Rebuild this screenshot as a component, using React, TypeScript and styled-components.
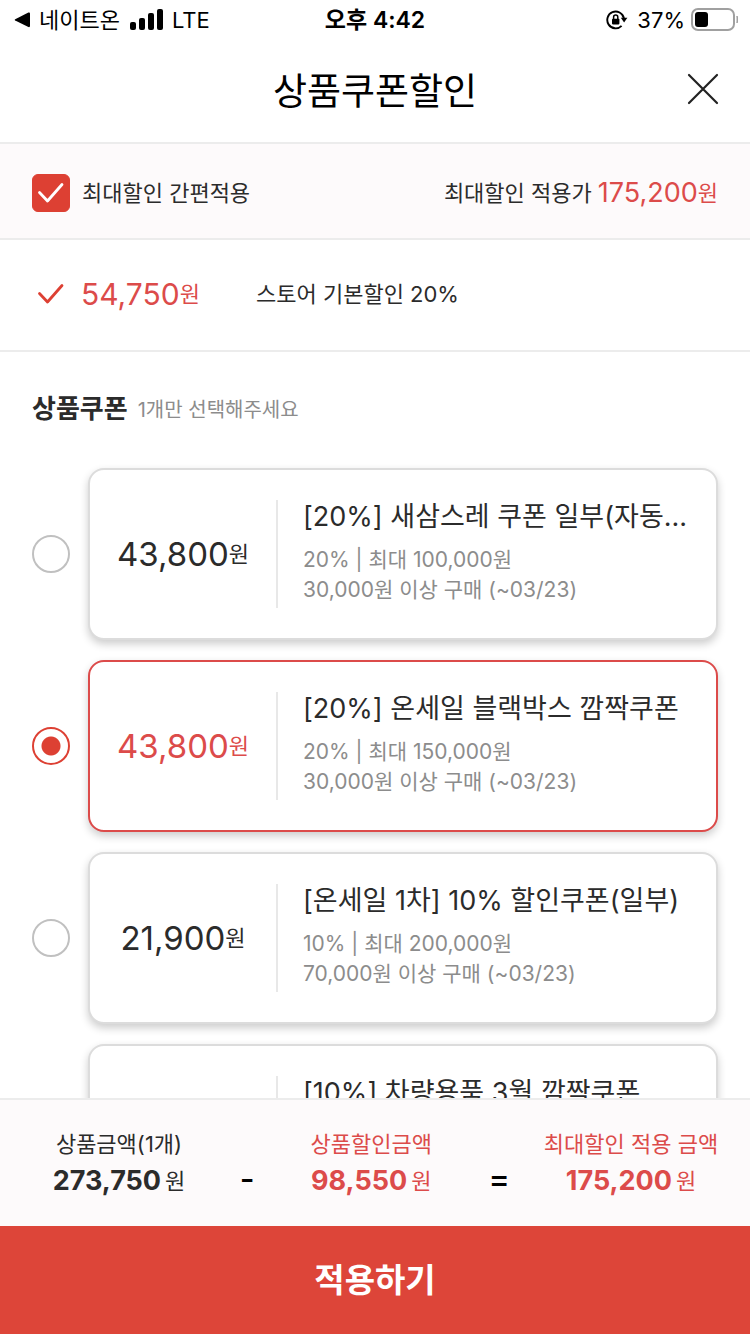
import React, { useState } from "react";
import styled, { createGlobalStyle, css } from "styled-components";

const color = {
  text: "#2b2b2b",
  muted: "#8c8c8c",
  red: "#dd4033",
  redText: "#dc4b4a",
  button: "#dd4539",
  line: "#ececec",
  tint: "#fdfafb",
};

const GlobalStyle = createGlobalStyle`
  *, *::before, *::after { box-sizing: border-box; }
  body {
    margin: 0;
    background: #fff;
    color: ${color.text};
    font-family: Inter, "Noto Sans CJK KR", sans-serif;
    font-size: 22px;
    line-height: 30px;
  }
  button, input { font: inherit; color: inherit; margin: 0; }
  h1, h2, p { margin: 0; font-weight: 400; }
`;

const Screen = styled.div`
  display: flex;
  flex-direction: column;
  height: 100vh;
`;

const StatusBar = styled.div`
  display: grid;
  grid-template-columns: 1fr auto 1fr;
  align-items: center;
  height: 40px;
  flex: none;
  padding: 0 12px;
  color: #000;
`;

const StatusGroup = styled.div<{ $end?: boolean }>`
  display: flex;
  align-items: center;
  gap: 9px;
  justify-content: ${(p) => (p.$end ? "flex-end" : "flex-start")};
`;

const Clock = styled.time`
  font-size: 23px;
  font-weight: 600;
`;

const Battery = styled.span`
  display: flex;
  align-items: center;
  gap: 6px;
`;

const Header = styled.header`
  display: grid;
  grid-template-columns: 1fr auto 1fr;
  align-items: center;
  height: 104px;
  flex: none;
  padding: 0 31px 4px;
  border-bottom: 2px solid ${color.line};
`;

const Title = styled.h1`
  grid-column: 2;
  padding-top: 6px;
  font-size: 37px;
  line-height: 48px;
  color: #000;
`;

const CloseButton = styled.button`
  justify-self: end;
  display: flex;
  padding: 0;
  border: 0;
  background: none;
  cursor: pointer;
`;

const QuickApply = styled.section`
  display: flex;
  align-items: center;
  justify-content: space-between;
  height: 96px;
  flex: none;
  padding: 4px 32px 0;
  background: ${color.tint};
  border-bottom: 2px solid ${color.line};
`;

const CheckLabel = styled.label`
  display: flex;
  align-items: center;
  gap: 12px;
  cursor: pointer;
`;

const CheckWrap = styled.span`
  display: grid;
  > * { grid-area: 1 / 1; }
  svg { pointer-events: none; }
`;

const Checkbox = styled.input`
  appearance: none;
  width: 38px;
  height: 38px;
  border: 1px solid #bbb;
  border-radius: 6px;
  background: #fff;
  &:checked { background: ${color.red}; border-color: ${color.red}; }
`;

const Inline = styled.p`
  display: flex;
  align-items: center;
  gap: 6px;
`;

const StoreDiscount = styled.section`
  display: flex;
  align-items: center;
  height: 112px;
  flex: none;
  padding: 0 32px 2px;
  border-bottom: 2px solid ${color.line};
`;

const StoreAmount = styled.div`
  display: flex;
  align-items: center;
  gap: 11px;
  width: 224px;
`;

type AmountSize = "small" | "medium" | "large";
const amountSizes = { small: 27, medium: 30, large: 33 };

const Amount = styled.span<{ $size: AmountSize; $red?: boolean }>`
  display: inline-flex;
  align-items: center;
  font-size: ${(p) => amountSizes[p.$size]}px;
  white-space: nowrap;
  ${(p) => p.$red && css`color: ${color.redText};`}
`;

const Won = styled.span`
  font-size: 22px;
  font-weight: 400;
`;

const CouponArea = styled.main`
  flex: 1;
  min-height: 0;
  overflow-y: auto;
  scrollbar-width: none;
  padding: 38px 32px 20px;
`;

const SectionHead = styled.div`
  display: flex;
  align-items: center;
  gap: 10px;
  height: 38px;
  margin-bottom: 40px;
`;

const SectionTitle = styled.h2`
  font-size: 26px;
  font-weight: 700;
`;

const Hint = styled.p`
  padding-top: 2px;
  font-size: 20px;
  color: ${color.muted};
`;

const CouponRow = styled.label`
  display: flex;
  align-items: center;
  gap: 18px;
  margin-bottom: 20px;
  cursor: pointer;
`;

const Radio = styled.input`
  appearance: none;
  flex: none;
  width: 38px;
  height: 38px;
  border: 2px solid #c0c0c0;
  border-radius: 50%;
  background: #fff;
  &:checked {
    border-color: ${color.red};
    background: radial-gradient(circle, ${color.red} 9px, #fff 10px);
  }
`;

const Card = styled.div<{ $selected: boolean }>`
  display: flex;
  flex: 1;
  min-width: 0;
  min-height: 172px;
  padding: 30px 26px 30px 0;
  border: 2px solid ${(p) => (p.$selected ? color.redText : "#dcdcdc")};
  border-radius: 16px;
  background: #fff;
  box-shadow: 0 4px 8px rgba(0, 0, 0, 0.2);
`;

const PriceCell = styled.div`
  display: flex;
  align-items: center;
  justify-content: center;
  flex: none;
  width: 188px;
  border-right: 2px solid #e8e8e8;
`;

const CouponInfo = styled.div`
  min-width: 0;
  padding-left: 25px;
`;

const CouponName = styled.p`
  margin-bottom: 11px;
  font-size: 27px;
  line-height: 34px;
  overflow: hidden;
  text-overflow: ellipsis;
  white-space: nowrap;
`;

const Condition = styled.p`
  font-size: 21px;
  color: ${color.muted};
`;

const Summary = styled.section`
  display: grid;
  grid-template-columns: 174px 11fr 166px 12fr 174px;
  align-items: end;
  justify-items: center;
  flex: none;
  height: 128px;
  padding: 0 32px 30px;
  background: ${color.tint};
  border-top: 2px solid ${color.line};
`;

const SummaryItem = styled.div<{ $red?: boolean }>`
  display: flex;
  flex-direction: column;
  align-items: center;
  gap: 7px;
  white-space: nowrap;
  ${(p) => p.$red && css`color: ${color.redText};`}
`;

const Total = styled.strong`
  display: flex;
  align-items: center;
  gap: 4px;
  font-size: 27px;
  font-weight: 700;
`;

const Operator = styled.span`
  font-size: 32px;
  line-height: 34px;
  font-weight: 500;
  color: #000;
`;

const ApplyButton = styled.button`
  flex: none;
  height: 108px;
  border: 0;
  background: ${color.button};
  color: #fff;
  font-size: 33px;
  font-weight: 700;
  cursor: pointer;
`;

const coupons: { id: string; price?: string; name: string; conditions: string[] }[] = [
  { id: "a", price: "43,800", name: "[20%] 새삼스레 쿠폰 일부(자동...", conditions: ["20% | 최대 100,000원", "30,000원 이상 구매 (~03/23)"] },
  { id: "b", price: "43,800", name: "[20%] 온세일 블랙박스 깜짝쿠폰", conditions: ["20% | 최대 150,000원", "30,000원 이상 구매 (~03/23)"] },
  { id: "c", price: "21,900", name: "[온세일 1차] 10% 할인쿠폰(일부)", conditions: ["10% | 최대 200,000원", "70,000원 이상 구매 (~03/23)"] },
  { id: "d", name: "[10%] 차량용품 3월 깜짝쿠폰", conditions: [] },
];

const Tick = ({ stroke }: { stroke: string }) => (
  <svg width="38" height="38" viewBox="0 0 38 38" fill="none" stroke={stroke} strokeWidth="2.8" strokeLinecap="round" strokeLinejoin="round">
    <path d="M7.5 18.5 15.5 27 30 10.5" />
  </svg>
);

export default function App() {
  const [quick, setQuick] = useState(true);
  const [selected, setSelected] = useState("b");

  return (
    <>
      <GlobalStyle />
      <Screen>
        <StatusBar>
          <StatusGroup>
            <svg width="18" height="16" viewBox="0 0 18 16">
              <path d="M3.2 7.2 16.4.6Q18 0 18 1.6V14Q18 15.6 16.4 15L3.2 8.6Q2 7.9 3.2 7.2Z" />
            </svg>
            <span>네이트온</span>
            <svg width="34" height="24" viewBox="0 0 34 24">
              <rect x="1" y="14" width="6" height="8" rx="2" />
              <rect x="10" y="10" width="6" height="12" rx="2" />
              <rect x="19" y="5" width="6" height="17" rx="2" />
              <rect x="28" y="1" width="6" height="21" rx="2" />
            </svg>
            <span>LTE</span>
          </StatusGroup>
          <Clock>오후 4:42</Clock>
          <StatusGroup $end>
            <svg width="22" height="20" viewBox="0 0 22 20" fill="none" stroke="#000">
              <path d="M17.9 8.2A8.4 8.4 0 1 0 15.6 15.9" strokeWidth="1.9" />
              <path d="M14.8 7.8h6.6l-3.3 4.6Z" fill="#000" stroke="none" />
              <rect x="6" y="8.8" width="7.4" height="5.6" rx="0.8" fill="#000" stroke="none" />
              <path d="M7.6 9V7.2a2.1 2.1 0 0 1 4.2 0V9" strokeWidth="1.5" />
            </svg>
            <Battery>
              <span>37%</span>
              <svg width="47" height="24" viewBox="0 0 47 24">
                <rect x="1" y="1" width="42" height="21" rx="6" fill="none" stroke="#a0a0a0" strokeWidth="2" />
                <rect x="4" y="4" width="13" height="15" rx="3" />
                <path d="M46 8q2 3.5 0 7Z" fill="#a0a0a0" stroke="#a0a0a0" />
              </svg>
            </Battery>
          </StatusGroup>
        </StatusBar>

        <Header>
          <Title>상품쿠폰할인</Title>
          <CloseButton type="button" aria-label="닫기">
            <svg width="32" height="32" viewBox="0 0 32 32" stroke="#222" strokeWidth="2.2" strokeLinecap="round">
              <path d="M2 2 30 30M30 2 2 30" />
            </svg>
          </CloseButton>
        </Header>

        <QuickApply>
          <CheckLabel>
            <CheckWrap>
              <Checkbox type="checkbox" checked={quick} onChange={(e) => setQuick(e.target.checked)} />
              {quick && <Tick stroke="#fff" />}
            </CheckWrap>
            최대할인 간편적용
          </CheckLabel>
          <Inline>
            최대할인 적용가
            <Amount $size="small" $red>
              175,200<Won>원</Won>
            </Amount>
          </Inline>
        </QuickApply>

        <StoreDiscount>
          <StoreAmount>
            <Tick stroke={color.red} />
            <Amount $size="medium" $red>
              54,750<Won>원</Won>
            </Amount>
          </StoreAmount>
          <p>스토어 기본할인 20%</p>
        </StoreDiscount>

        <CouponArea>
          <SectionHead>
            <SectionTitle>상품쿠폰</SectionTitle>
            <Hint>1개만 선택해주세요</Hint>
          </SectionHead>
          {coupons.map((c) => (
            <CouponRow key={c.id}>
              <Radio type="radio" name="coupon" checked={selected === c.id} onChange={() => setSelected(c.id)} />
              <Card $selected={selected === c.id}>
                <PriceCell>
                  {c.price && (
                    <Amount $size="large" $red={selected === c.id}>
                      {c.price}
                      <Won>원</Won>
                    </Amount>
                  )}
                </PriceCell>
                <CouponInfo>
                  <CouponName>{c.name}</CouponName>
                  {c.conditions.map((line) => (
                    <Condition key={line}>{line}</Condition>
                  ))}
                </CouponInfo>
              </Card>
            </CouponRow>
          ))}
        </CouponArea>

        <Summary>
          <SummaryItem>
            <span>상품금액(1개)</span>
            <Total>273,750<Won>원</Won></Total>
          </SummaryItem>
          <Operator>-</Operator>
          <SummaryItem $red>
            <span>상품할인금액</span>
            <Total>98,550<Won>원</Won></Total>
          </SummaryItem>
          <Operator>=</Operator>
          <SummaryItem $red>
            <span>최대할인 적용 금액</span>
            <Total>175,200<Won>원</Won></Total>
          </SummaryItem>
        </Summary>
        <ApplyButton type="button">적용하기</ApplyButton>
      </Screen>
    </>
  );
}
